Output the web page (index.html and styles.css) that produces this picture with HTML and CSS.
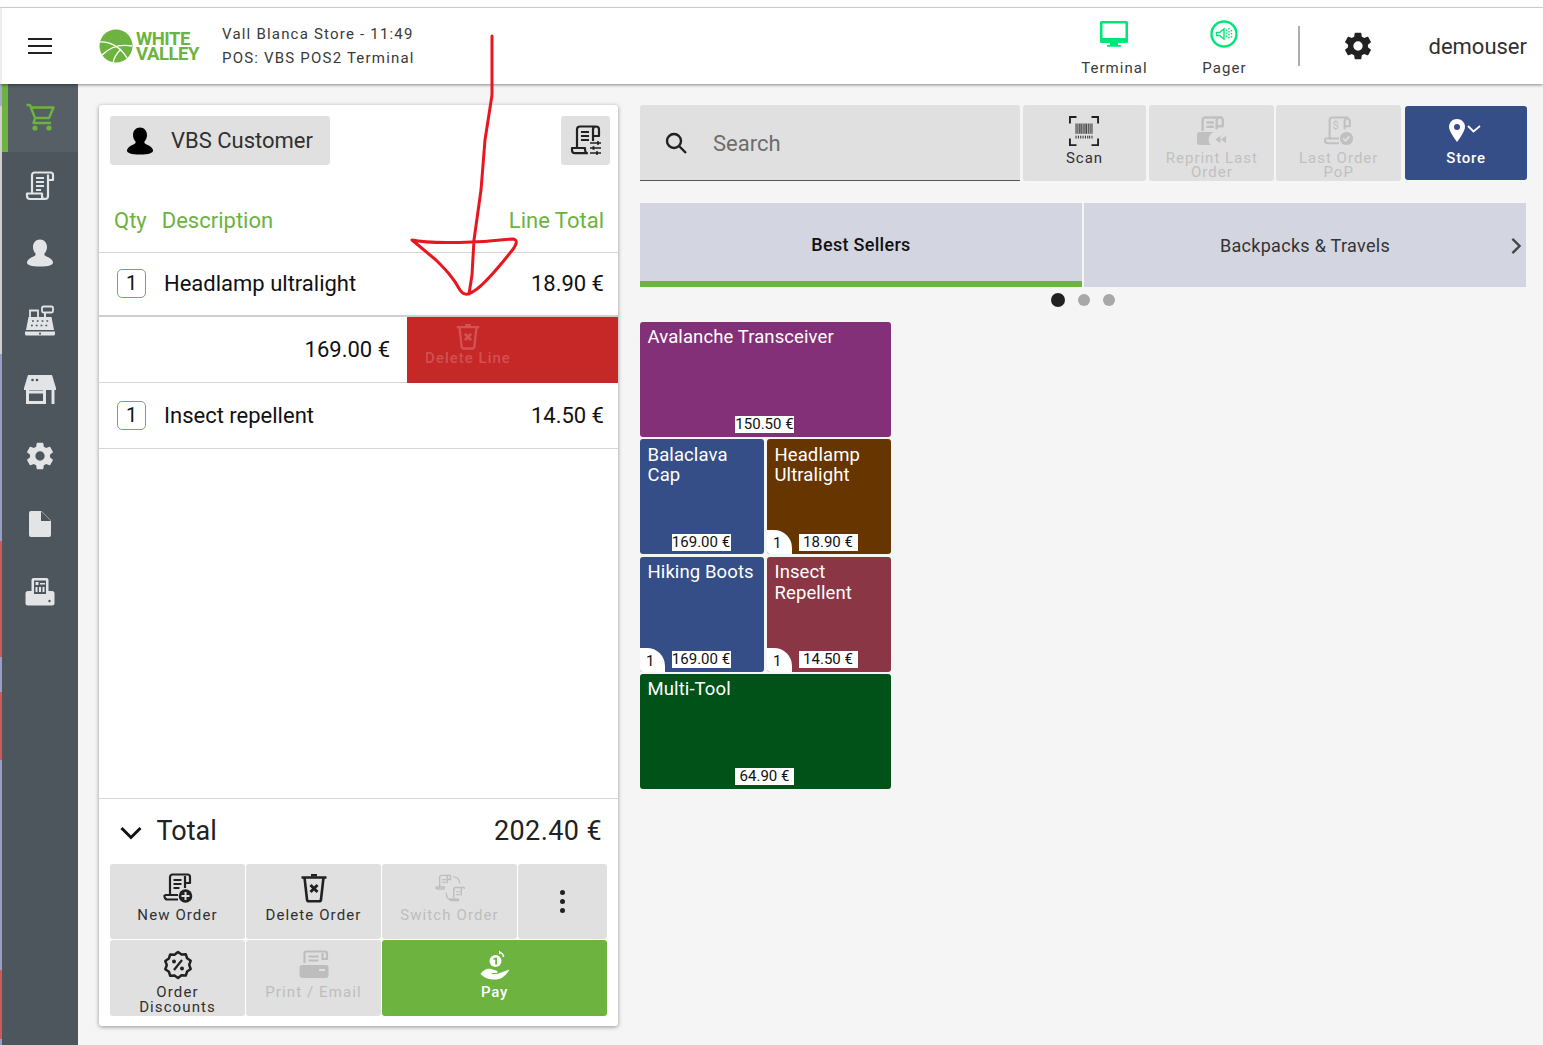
FILE: index.html
```html
<!DOCTYPE html>
<html lang="en">
<head>
<meta charset="utf-8">
<title>White Valley POS</title>
<link rel="stylesheet" href="styles.css">
</head>
<body>
<svg class="defs" width="0" height="0" aria-hidden="true">
  <symbol id="scroll" viewBox="0 0 30 30">
    <path fill="none" stroke="currentColor" stroke-width="2.200" stroke-linejoin="round" d="M7 22V4a2.500 2.500 0 0 1 2.500-2.500h16a2.500 2.500 0 0 1 2.500 2.500v5h-5M23 3.500V25a3 3 0 0 1-3 3M2 22.500h15V25a3 3 0 0 0 3 3H5a3 3 0 0 1-3-3z"/>
    <path fill="none" stroke="currentColor" stroke-width="2" d="M11 7h8M11 11h8M11 15h8M11 19h5"/>
  </symbol>
  <symbol id="trash" viewBox="0 0 26 30">
    <path fill="none" stroke="currentColor" stroke-width="2.600" stroke-linejoin="round" d="M.5 4.500h25M3.500 4.500l2.500 22a2 2 0 0 0 2 1.800h10a2 2 0 0 0 2-1.800l2.500-22"/>
    <path fill="currentColor" d="M10 1h6v2.500h-6z"/>
    <path fill="none" stroke="currentColor" stroke-width="3" d="M9.500 12l7 7M16.500 12l-7 7"/>
  </symbol>
  <symbol id="person" viewBox="0 0 30 30">
    <path fill="currentColor" d="M15 1.500c4.200 0 7 3.300 7 7.500 0 2.800-1.100 5-2.500 6.500-.5 1.200.3 2.200 2 2.900 3 1.300 6.500 3.300 6.500 6.100 0 2.500-4 4-13 4s-13-1.500-13-4c0-2.800 3.500-4.800 6.500-6.100 1.700-.7 2.500-1.700 2-2.900C9.100 14 8 11.800 8 9c0-4.200 2.800-7.500 7-7.500z"/>
  </symbol>
  <symbol id="gear" viewBox="0 0 24 24">
    <path fill="currentColor" d="M19.430 12.980c.04-.32.070-.64.070-.98s-.03-.66-.07-.98l2.110-1.650c.19-.15.24-.42.120-.64l-2-3.460c-.12-.22-.39-.3-.61-.22l-2.490 1c-.52-.4-1.080-.73-1.690-.98l-.38-2.650A.488.488 0 0 0 14 2h-4c-.25 0-.46.18-.49.420l-.38 2.650c-.61.25-1.170.59-1.690.98l-2.490-1c-.23-.09-.49 0-.61.220l-2 3.460c-.13.220-.07.490.12.640l2.110 1.650c-.04.320-.07.650-.07.980s.03.660.07.980l-2.110 1.650c-.19.150-.24.420-.12.640l2 3.460c.12.220.39.300.61.220l2.490-1c.52.400 1.080.730 1.690.980l.38 2.650c.03.240.24.420.49.420h4c.25 0 .46-.18.49-.42l.38-2.650c.61-.25 1.170-.59 1.690-.98l2.490 1c.23.090.49 0 .61-.22l2-3.460c.12-.22.070-.49-.12-.64zM12 15.500a3.500 3.500 0 1 1 0-7 3.500 3.500 0 0 1 0 7z"/>
  </symbol>
</svg>

<div class="page-top"></div>
<header class="topbar">
  <button class="hamburger" aria-label="Menu"><span></span><span></span><span></span></button>
  <div class="logo">
    <svg class="logo-mark" viewBox="0 0 34 34">
      <circle cx="17" cy="17" r="16.500" fill="#6cb33f"/>
      <path fill="none" stroke="#fff" stroke-width="1.300" d="M0 13c12-1 22 6 28 16M3 26c8-8 19-11 30-9M14 34c1-6 4-10 8-14"/>
    </svg>
    <div class="logo-text">WHITE<br>VALLEY</div>
  </div>
  <div class="store-info">
    <div>Vall Blanca Store - 11:49</div>
    <div>POS: VBS POS2 Terminal</div>
  </div>
  <div class="status-item status-first">
    <svg class="status-icon" viewBox="0 0 30 30">
      <path fill="#00e676" d="M2.500 2h25A1.500 1.500 0 0 1 29 3.500v19a1.500 1.500 0 0 1-1.500 1.500H19v2h3v1.800H8V26h3v-2H2.500A1.500 1.500 0 0 1 1 22.500v-19A1.500 1.500 0 0 1 2.500 2z"/>
      <path fill="#fff" d="M3.500 4.500h23V19h-23z"/>
    </svg>
    <span>Terminal</span>
  </div>
  <div class="status-item">
    <svg class="status-icon" viewBox="0 0 30 30">
      <circle cx="15" cy="15" r="12.500" fill="none" stroke="#00e676" stroke-width="2.400"/>
      <path fill="none" stroke="#00e676" stroke-width="1.400" d="M7.500 13.500h3L15 10v10l-4.500-3.500h-3z"/>
      <path fill="none" stroke="#00e676" stroke-width="1.400" stroke-dasharray="1.500 1.500" d="M17.500 10.500v9M20 9v12M22.500 11v8"/>
    </svg>
    <span>Pager</span>
  </div>
  <div class="divider"></div>
  <svg class="top-gear"><use href="#gear"/></svg>
  <div class="username">demouser</div>
</header>

<div class="workspace">
  <div class="edge-strip"></div>
  <nav class="sidebar">
    <div class="nav-item active">
      <svg class="nav-icon" viewBox="0 0 30 30">
        <path fill="none" stroke="currentColor" stroke-width="2.400" stroke-linejoin="round" d="M.5 2H4l5 13-1.500 5H25M5 4.500h22.500L23 15H9"/>
        <circle cx="9" cy="25" r="2.600" fill="currentColor"/><circle cx="23" cy="25" r="2.600" fill="currentColor"/>
      </svg>
    </div>
    <div class="nav-item"><svg class="nav-icon"><use href="#scroll"/></svg></div>
    <div class="nav-item"><svg class="nav-icon"><use href="#person"/></svg></div>
    <div class="nav-item">
      <svg class="nav-icon wide" viewBox="0 0 32 32">
        <path fill="none" stroke="currentColor" stroke-width="1.800" d="M6 12V5.500h8V12"/>
        <rect x="18" y="1.500" width="11" height="6" rx="1.500" fill="none" stroke="currentColor" stroke-width="1.800"/>
        <path fill="none" stroke="currentColor" stroke-width="2" d="M21 7.500V12"/>
        <path fill="currentColor" d="M4.500 12h23L30 25H2zM1 26.500h30V29a1.500 1.500 0 0 1-1.500 1.500h-27A1.500 1.500 0 0 1 1 29z"/>
        <path fill="none" stroke="#4d555d" stroke-width="1.700" stroke-dasharray="1.800 3" d="M8 16h17M7 20.500h18"/>
        <path fill="#4d555d" d="M15 27.800h2v1.600h-2z"/>
      </svg>
    </div>
    <div class="nav-item">
      <svg class="nav-icon wide" viewBox="0 0 32 30">
        <path fill="currentColor" d="M4 1h24l4 13v2H0v-2z"/>
        <path fill="none" stroke="currentColor" stroke-width="3" d="M3.500 15v15M29 15v15M3.500 28.500h17V16M3.500 18h17"/>
        <circle cx="8.500" cy="6" r="1.300" fill="#4d555d"/><circle cx="13" cy="6" r="1.300" fill="#4d555d"/>
      </svg>
    </div>
    <div class="nav-item"><svg class="nav-icon wide"><use href="#gear"/></svg></div>
    <div class="nav-item">
      <svg class="nav-icon" viewBox="0 0 30 30">
        <path fill="currentColor" d="M6 2h10.500L26 11.500V26a2 2 0 0 1-2 2H6a2 2 0 0 1-2-2V4a2 2 0 0 1 2-2z"/>
        <path fill="#4d555d" d="M16 2v10h10z"/>
      </svg>
    </div>
    <div class="nav-item">
      <svg class="nav-icon" viewBox="0 0 30 30">
        <path fill="currentColor" d="M3 14h3.500V3a2 2 0 0 1 2-2h13a2 2 0 0 1 2 2v11H27a2.500 2.500 0 0 1 2.500 2.500V26a2.500 2.500 0 0 1-2.500 2.500H3A2.500 2.500 0 0 1 .5 26v-9.500A2.500 2.500 0 0 1 3 14z"/>
        <path fill="#4d555d" d="M9 3.500h12V17H9z"/>
        <path fill="currentColor" d="M10.500 5h3v3h-3zM15 6h5v1.500h-5zM10.500 10h2v5h-2zM14 10h2v5h-2zM17.500 10h2v5h-2z"/>
        <circle cx="24.500" cy="24" r="1.200" fill="#4d555d"/>
      </svg>
    </div>
  </nav>

  <main class="content">
    <section class="order-panel">
      <div class="panel-head">
        <button class="customer-btn">
          <svg class="customer-icon"><use href="#person"/></svg>
          <span>VBS Customer</span>
        </button>
        <button class="settings-btn" aria-label="Order settings">
          <svg class="settings-icon" viewBox="0 0 32 32">
            <path fill="none" stroke="currentColor" stroke-width="2.200" stroke-linejoin="round" d="M7 23V4.500A3 3 0 0 1 10 1.500h16M23 16V4.500a3 3 0 0 1 6 0V11h-6M2 23h13v2a3.500 3.500 0 0 0 2 3.200H5a3 3 0 0 1-3-3z"/>
            <path fill="none" stroke="currentColor" stroke-width="2" d="M11 7h8M11 11h8M11 15h8"/>
            <path fill="none" stroke="currentColor" stroke-width="1.600" d="M20 18h11M20 23h11M20 28h11"/>
            <path fill="currentColor" d="M27 16.300h2v3.400h-2zM22.500 21.300h2v3.400h-2zM26 26.300h2v3.400h-2z"/>
          </svg>
        </button>
      </div>
      <div class="col-heads">
        <span class="col-qty">Qty</span>
        <span class="col-desc">Description</span>
        <span class="col-total">Line Total</span>
      </div>
      <div class="line-row first-line">
        <span class="qty-box">1</span>
        <span class="line-name">Headlamp ultralight</span>
        <span class="line-total">18.90 €</span>
      </div>
      <div class="swiped-row">
        <span class="swiped-price">169.00 €</span>
        <div class="delete-line">
          <div class="delete-inner">
            <svg class="delete-icon"><use href="#trash"/></svg>
            <span>Delete Line</span>
          </div>
        </div>
      </div>
      <div class="line-row">
        <span class="qty-box">1</span>
        <span class="line-name">Insect repellent</span>
        <span class="line-total">14.50 €</span>
      </div>
      <div class="panel-spacer"></div>
      <div class="total-row">
        <svg class="total-chevron" viewBox="0 0 24 16"><path fill="none" stroke="currentColor" stroke-width="3" d="M2.500 3l9.500 9.500L21.500 3"/></svg>
        <span class="total-label">Total</span>
        <span class="total-value">202.40 €</span>
      </div>
      <div class="action-grid">
        <button class="action">
          <svg class="action-icon" viewBox="0 0 30 30">
            <path fill="none" stroke="currentColor" stroke-width="2.200" stroke-linejoin="round" d="M7 21V4A2.500 2.500 0 0 1 9.500 1.500h15A2.500 2.500 0 0 1 27 4v6h-5M22 3v12M1.500 22H15M1.500 22v1.500a3 3 0 0 0 3 3H15"/>
            <path fill="none" stroke="currentColor" stroke-width="2" d="M10.500 7h8M10.500 11h8M10.500 15h6"/>
            <circle cx="22.500" cy="23" r="6.800" fill="currentColor"/>
            <path stroke="#e0e0e0" stroke-width="2" d="M22.500 19v8M18.500 23h8"/>
          </svg>
          <span>New Order</span>
        </button>
        <button class="action">
          <svg class="action-icon"><use href="#trash"/></svg>
          <span>Delete Order</span>
        </button>
        <button class="action disabled">
          <svg class="action-icon" viewBox="0 0 32 30">
            <path fill="none" stroke="currentColor" stroke-width="1.500" stroke-linejoin="round" d="M5 13V3.500A2 2 0 0 1 7 1.500h9M13 10V3a1.700 1.700 0 0 1 3.500 0v3H13M1 14h9v1.500M1 14a2 2 0 0 0 2 2h7M20 26V16.500a2 2 0 0 1 2-2h9M28 23V16a1.700 1.700 0 0 1 3.500 0M16 27h9v1.500H18a2 2 0 0 1-2-2z"/>
            <path fill="none" stroke="currentColor" stroke-width="1.300" d="M7.500 6h4M7.500 9h4M22.500 19h4M22.500 22h4M19 3c4 0 7 2.500 7.500 7M12 20c0 4 2 7 5 8"/>
          </svg>
          <span>Switch Order</span>
        </button>
        <button class="action more" aria-label="More"><span class="dots"><i></i><i></i><i></i></span></button>
        <button class="action tall">
          <svg class="action-icon" viewBox="0 0 30 30">
            <path fill="none" stroke="currentColor" stroke-width="2.500" stroke-linejoin="round" d="M15 2l3.500 2.500 4.300-.3 1.300 4.100 3.600 2.500-1.500 4.100 1.500 4.100-3.600 2.500-1.300 4.100-4.300-.3L15 28l-3.500-2.500-4.300.3-1.300-4.100-3.600-2.500 1.500-4.100-1.500-4.100 3.600-2.500 1.300-4.100 4.300.3z"/>
            <path stroke="currentColor" stroke-width="2.200" d="M19 10l-8 10"/>
            <circle cx="11" cy="11.500" r="2" fill="currentColor"/><circle cx="19" cy="18.500" r="2" fill="currentColor"/>
          </svg>
          <span>Order<br>Discounts</span>
        </button>
        <button class="action tall disabled">
          <svg class="action-icon" viewBox="0 0 30 30">
            <path fill="currentColor" d="M3 15h24a2.500 2.500 0 0 1 2.500 2.500V25a3 3 0 0 1-3 3h-23a3 3 0 0 1-3-3v-7.500A2.500 2.500 0 0 1 3 15z"/>
            <path fill="none" stroke="currentColor" stroke-width="2.200" d="M5.500 13V3.500a2 2 0 0 1 2-2H26a2 2 0 0 1 2 2V9h-4.500V3M9.500 6.500h10M9.500 10.500h10"/>
            <path fill="#e0e0e0" d="M20 19h6v2h-6z"/>
          </svg>
          <span>Print / Email</span>
        </button>
        <button class="action tall pay">
          <svg class="action-icon" viewBox="0 0 30 30">
            <circle cx="15.500" cy="11" r="6" fill="currentColor"/>
            <path fill="none" stroke="currentColor" stroke-width="1.700" d="M19 2.500a4.500 4.500 0 0 1 4.500 4.500"/>
            <path fill="currentColor" d="M19 .5l2.500 2-2.500 2zM.5 24C3 20 7 18 11 19l5 1.500c2 .5 2 2.500 0 2.500h-4.500l.5 1h5l12.500-4.500C27 24 23 28 19 29 13 30.500 5 29 .5 24z"/>
            <path fill="#6cb33f" d="M13.500 8.500l2-1h1.500v7h-1.800v-5l-1.700.6z"/>
          </svg>
          <span>Pay</span>
        </button>
      </div>
    </section>

    <section class="shop">
      <div class="toolbar">
        <label class="search">
          <svg class="search-icon" viewBox="0 0 24 24"><path fill="none" stroke="currentColor" stroke-width="2.400" d="M10 3a7 7 0 1 1 0 14 7 7 0 0 1 0-14zM15 15l7 7"/></svg>
          <span>Search</span>
        </label>
        <button class="tool scan">
          <svg class="tool-icon" viewBox="0 0 32 32">
            <path fill="none" stroke="currentColor" stroke-width="2" d="M1 8V1h7M24 1h7v7M1 24v7h7M24 31h7v-7"/>
            <path fill="none" stroke="currentColor" stroke-width="1" d="M7.500 8v11M9.500 8v11M11.500 8v11M13 8v11M15 8v11M17 8v11M18.500 8v11M20.500 8v11M22.500 8v11M24.500 8v11M7.500 21v3M10 21v3M12.500 21v3M15 21v3M17.500 21v3M20 21v3M22 21v3M24.500 21v3"/>
          </svg>
          <span>Scan</span>
        </button>
        <button class="tool disabled">
          <svg class="tool-icon" viewBox="0 0 32 32">
            <path fill="none" stroke="currentColor" stroke-width="2.600" stroke-linejoin="round" d="M6 16V4.500A3 3 0 0 1 9 1.500h17M21 14V4.500a3 3 0 0 1 6.500 0V11H21M10 7h8M10 11.500h8"/>
            <path fill="currentColor" d="M3 17h15a9 9 0 0 0-3.500 14H3a3 3 0 0 1-3-3v-8a3 3 0 0 1 3-3z"/>
            <path fill="currentColor" d="M25 21v8l-5.500-4zM31 21v8l-5.500-4z"/>
          </svg>
          <span>Reprint Last<br>Order</span>
        </button>
        <button class="tool disabled pop">
          <svg class="tool-icon" viewBox="0 0 32 32">
            <path fill="none" stroke="currentColor" stroke-width="2.200" stroke-linejoin="round" d="M6 23V4.500A3 3 0 0 1 9 1.500h17M22 14V4.500a3 3 0 0 1 5.500 0V11H22M1 24h15M1 24v2a3 3 0 0 0 3 3h12"/>
            <text class="dollar" x="9" y="14">$</text>
            <circle cx="24" cy="24" r="7" fill="currentColor"/>
            <path fill="none" stroke="#e0e0e0" stroke-width="1.800" d="M20.500 24l2.500 2.500 4-4.500"/>
          </svg>
          <span>Last Order<br>PoP</span>
        </button>
        <button class="tool store">
          <svg class="store-icon" viewBox="0 0 40 26">
            <path fill="currentColor" d="M9 1c4.500 0 8 3.400 8 7.800C17 14 9 24 9 24S1 14 1 8.800C1 4.400 4.500 1 9 1z"/>
            <circle cx="9" cy="9" r="3" fill="#354e88"/>
            <path fill="none" stroke="currentColor" stroke-width="1.800" d="M20 8l5.500 5.500L32 8"/>
          </svg>
          <span>Store</span>
        </button>
      </div>

      <div class="tabs">
        <div class="tab active">Best Sellers</div>
        <div class="tab">Backpacks &amp; Travels
          <svg class="tab-next" viewBox="0 0 12 20"><path fill="none" stroke="currentColor" stroke-width="2.600" d="M2 2l8 8-8 8"/></svg>
        </div>
      </div>
      <div class="pager-dots"><i class="on"></i><i></i><i></i></div>

      <div class="products">
        <div class="tile wide-tile purple"><span class="tile-name">Avalanche Transceiver</span><span class="tile-price">150.50 €</span></div>
        <div class="tile blue"><span class="tile-name">Balaclava Cap</span><span class="tile-price">169.00 €</span></div>
        <div class="tile brown"><span class="tile-name">Headlamp Ultralight</span><span class="tile-price">18.90 €</span><span class="tile-qty">1</span></div>
        <div class="tile blue"><span class="tile-name">Hiking Boots</span><span class="tile-price">169.00 €</span><span class="tile-qty">1</span></div>
        <div class="tile crimson"><span class="tile-name">Insect Repellent</span><span class="tile-price">14.50 €</span><span class="tile-qty">1</span></div>
        <div class="tile wide-tile green"><span class="tile-name">Multi-Tool</span><span class="tile-price">64.90 €</span></div>
      </div>
    </section>
  </main>
</div>

<svg class="annotation" viewBox="0 0 1543 1045" aria-hidden="true">
  <path fill="none" stroke="#e8161e" stroke-width="3" stroke-linecap="round" stroke-linejoin="round" d="M492 36V95L485 140 481 190 474 240 472 275 469 294M412 240C425 243 445 243 472 242 490 242 505 239 513 239 519 240 516 246 510 253 498 268 484 285 474 291 468 295 464 296 460 290 453 277 445 269 436 260L412 240"/>
</svg>
</body>
</html>
```
FILE: styles.css
```css
* { box-sizing: border-box; }
html, body { margin: 0; height: 100%; }
body {
  position: relative;
  width: 1543px;
  height: 1045px;
  overflow: hidden;
  display: flex;
  flex-direction: column;
  background: #f5f5f5;
  font-family: Roboto, "Liberation Sans", sans-serif;
  color: #212121;
}
button { font-family: inherit; border: 0; padding: 0; cursor: pointer; }
.defs { position: absolute; }

.page-top { height: 8px; background: #fff; border-bottom: 1px solid #dcdcdc; flex: none; }

/* header */
.topbar {
  flex: none;
  position: relative;
  z-index: 2;
  height: 76px;
  background: #fff;
  display: flex;
  align-items: center;
  box-shadow: 0 1px 3px rgba(0,0,0,.45);
  border-left: 2px solid #eee;
}
.hamburger {
  width: 24px; height: 16px;
  margin-left: 26px;
  background: none;
  display: flex; flex-direction: column; justify-content: space-between;
}
.hamburger span { display: block; height: 2.400px; background: #212121; }
.logo { display: flex; align-items: center; margin-left: 47px; width: 123px; }
.logo-mark { width: 34px; height: 34px; flex: none; }
.logo-text {
  margin: 2px 0 0 3px;
  font-size: 18.500px;
  line-height: 15px;
  font-weight: 700;
  letter-spacing: -.45px;
  color: #6cb33f;
}
.store-info {
  font-size: 15px; line-height: 23.500px; letter-spacing: 1.200px; color: #3a3a3a;
  padding-top: 1px;
}
.status-item {
  width: 110px;
  display: flex; flex-direction: column; align-items: center;
  font-size: 15px; letter-spacing: 1.050px; color: #3a3a3a;
  margin-top: 4px;
}
.status-first { margin-left: auto; }
.status-icon { width: 30px; height: 30px; margin-bottom: 10px; margin-top: -1px; }
.divider { width: 2px; height: 40px; background: #aeaeae; margin-left: 19px; }
.top-gear { width: 32px; height: 32px; margin-left: 42px; color: #212121; }
.username { font-size: 22px; margin-left: 54px; margin-right: 16px; color: #303030; }

/* frame */
.workspace { flex: 1; display: flex; min-height: 0; }
.edge-strip {
  width: 2px; flex: none;
  background: linear-gradient(#a7a9c8 0 22px, #cfcfcf 22px 270px, #9c9cc8 270px 457px, #d05a58 457px 573px, #9c9cc8 573px 608px, #d05a58 608px 676px, #9c9cc8 676px 886px, #d05a58 886px 955px, #9c9cc8 955px);
}
.sidebar {
  width: 76px; flex: none;
  background: #4d555d;
  color: #e2e4e6;
}
.nav-item {
  height: 67.700px;
  display: flex; align-items: center; justify-content: center;
}
.nav-item.active {
  background: #565e66;
  border-left: 6px solid #6cb33f;
  padding-right: 4px;
  color: #6cb33f;
}
.nav-icon { width: 30px; height: 30px; }
.nav-icon.wide { width: 32px; height: 32px; }

.content {
  flex: 1; min-width: 0;
  display: flex;
  padding: 21px 16px 19px 21px;
  gap: 22px;
}

/* order panel */
.order-panel {
  width: 519px; flex: none;
  background: #fff;
  border-radius: 3px;
  box-shadow: 0 1px 4px rgba(0,0,0,.4);
  display: flex; flex-direction: column;
}
.panel-head {
  display: flex; justify-content: space-between;
  padding: 11px 8px 0 11px;
}
.customer-btn {
  width: 220px; height: 49px;
  background: #e0e0e0;
  border-radius: 3px;
  display: flex; align-items: center;
  font-size: 22px;
  color: #303030;
}
.customer-icon { width: 30px; height: 30px; margin-left: 15px; margin-right: 16px; color: #000; }
.settings-btn {
  width: 49px; height: 49px;
  background: #e0e0e0;
  border-radius: 3px;
  color: #212121;
  display: flex; align-items: center; justify-content: center;
}
.settings-icon { width: 32px; height: 32px; }
.col-heads {
  height: 88px;
  padding: 24px 14px 0 15px;
  display: flex;
  align-items: center;
  font-size: 22px;
  color: #6cb33f;
  border-bottom: 1px solid #d6d6d6;
}
.col-desc { margin-left: 15px; }
.col-total { margin-left: auto; }
.line-row {
  height: 66px;
  display: flex; align-items: center;
  padding: 0 14px 1px 18px;
  font-size: 22px;
  color: #111;
  border-bottom: 1px solid #d6d6d6;
}
.first-line { height: 64px; border-bottom: 2px solid #cfcfcf; padding-bottom: 2px; }
.qty-box {
  width: 29px; height: 29px;
  border: 1px solid #6cb33f;
  border-radius: 5px;
  font-size: 20px;
  display: flex; align-items: center; justify-content: center;
}
.line-name { margin-left: 18px; }
.line-total { margin-left: auto; }
.swiped-row {
  height: 66px;
  display: flex; align-items: center; justify-content: flex-end;
  border-bottom: 1px solid #d6d6d6;
  font-size: 22px;
  color: #111;
}
.swiped-price { margin-right: 17px; }
.delete-line {
  width: 211px; height: 66px;
  background: #c62828;
  color: rgba(255,255,255,.2);
}
.delete-inner {
  width: 122px;
  display: flex; flex-direction: column; align-items: center;
  font-size: 15px; font-weight: 500; letter-spacing: 1px;
  line-height: 16px;
  padding-top: 6px;
}
.delete-icon { width: 26px; height: 27px; margin-bottom: 0; }
.panel-spacer { flex: 1; }
.total-row {
  height: 66px;
  border-top: 1px solid #d6d6d6;
  display: flex; align-items: center;
  padding: 0 16px 1px 20px;
  color: #212121;
}
.total-chevron { width: 24px; height: 16px; color: #111; margin-top: 4px; }
.total-label { font-size: 27px; margin-left: 13.500px; }
.total-value { font-size: 27px; letter-spacing: .4px; margin-left: auto; }
.action-grid {
  display: grid;
  grid-template-columns: 135px 135px 135px 89px;
  grid-template-rows: 75px 76px;
  gap: 1px 1px;
  padding: 0 11px 10px;
}
.action {
  background: #e0e0e0;
  border-radius: 3px;
  display: flex; flex-direction: column; align-items: center;
  padding-top: 9px;
  font-size: 15px;
  line-height: 15px;
  letter-spacing: 1.100px;
  color: #303030;
}
.action-icon { width: 30px; height: 30px; margin-bottom: 5px; color: #212121; }
.action.tall { padding-top: 10px; }
.action.disabled, .action.disabled .action-icon { color: #bdbdbd; }
.action.more { justify-content: center; padding-top: 0; }
.dots { display: flex; flex-direction: column; gap: 4px; }
.dots i { display: block; width: 5px; height: 5px; border-radius: 50%; background: #212121; }
.action.pay { grid-column: span 2; background: #6cb33f; color: #fff; font-weight: 500; letter-spacing: .8px; }
.action.pay .action-icon { color: #fff; }

/* shop */
.shop { flex: 1; min-width: 0; display: flex; flex-direction: column; }
.toolbar { display: flex; height: 76px; gap: 3px; }
.search {
  width: 380px;
  padding-top: 1px;
  background: #e0e0e0;
  border-radius: 3px 3px 0 0;
  border-bottom: 1px solid #555;
  display: flex; align-items: center;
  font-size: 22px;
  color: #6d6d6d;
}
.search-icon { width: 24px; height: 24px; margin-left: 24px; margin-right: 25px; color: #212121; }
.tool {
  width: 125px;
  background: #e0e0e0;
  border-radius: 3px;
  display: flex; flex-direction: column; align-items: center;
  padding-top: 11px;
  font-size: 15px;
  line-height: 14px;
  letter-spacing: 1px;
  color: #303030;
}
.tool.scan { width: 124px; }
.tool.pop { margin-left: -1px; }
.tool-icon { width: 30px; height: 30px; margin-bottom: 5px; color: #212121; }
.tool.disabled, .tool.disabled .tool-icon { color: #c0c0c0; }
.dollar { font-family: Roboto, sans-serif; font-size: 12px; fill: currentColor; }
.tool.store {
  width: 122px; height: 74px;
  margin-top: 1px; margin-left: 1px;
  background: #354e88;
  color: #fff;
  font-weight: 500;
  letter-spacing: .8px;
  padding-top: 9px;
}
.store-icon { width: 40px; height: 26px; margin-bottom: 7px; margin-top: 3px; margin-left: 4px; }

.tabs { display: flex; gap: 2px; margin-top: 22px; width: 886px; height: 84px; }
.tab {
  flex: 1; position: relative;
  background: #d3d6e0;
  display: flex; align-items: center; justify-content: center;
  font-size: 18px;
  letter-spacing: .3px;
  color: #333;
}
.tab.active {
  font-weight: 500; color: #111;
  border-bottom: 6px solid #6cb33f;
  padding-top: 5px;
}
.tab-next { position: absolute; right: 4px; top: 34px; width: 12px; height: 18px; color: #444; }
.pager-dots {
  display: flex; align-items: center; gap: 13px;
  margin: 6px 0 0 411px;
  height: 14px;
}
.pager-dots i { width: 12px; height: 12px; border-radius: 50%; background: #a8a8a8; }
.pager-dots i.on { width: 14px; height: 14px; background: #212121; }

.products {
  margin-top: 15px;
  width: 251px;
  display: grid;
  grid-template-columns: repeat(2, 1fr);
  grid-auto-rows: 115px;
  gap: 2.330px 3px;
}
.tile {
  position: relative;
  border-radius: 3px;
  padding: 5.400px 9px 3.600px 7px;
  color: #fff;
  font-size: 18.500px;
  line-height: 20.500px;
  letter-spacing: .1px;
  display: flex; flex-direction: column;
  justify-content: space-between;
  overflow: hidden;
}
.tile-name { margin-left: .5px; }
.wide-tile { grid-column: span 2; }
.purple { background: #843078; }
.blue { background: #354e88; }
.brown { background: #673600; }
.crimson { background: #8a3644; }
.green { background: #005219; }
.tile-price {
  align-self: center;
  background: #fff;
  color: #111;
  font-size: 15px;
  line-height: 17px;
  letter-spacing: 0;
  width: 59px;
  text-align: center;
  white-space: nowrap;
}
.tile-qty {
  position: absolute;
  left: 0; bottom: 0;
  width: 25px; height: 24px;
  background: #fff;
  color: #111;
  border-radius: 0 18px 0 0;
  font-size: 15px;
  line-height: 26px;
  padding-left: 6px;
}

.annotation { position: absolute; left: 0; top: 0; width: 1543px; height: 1045px; z-index: 5; pointer-events: none; }
```
